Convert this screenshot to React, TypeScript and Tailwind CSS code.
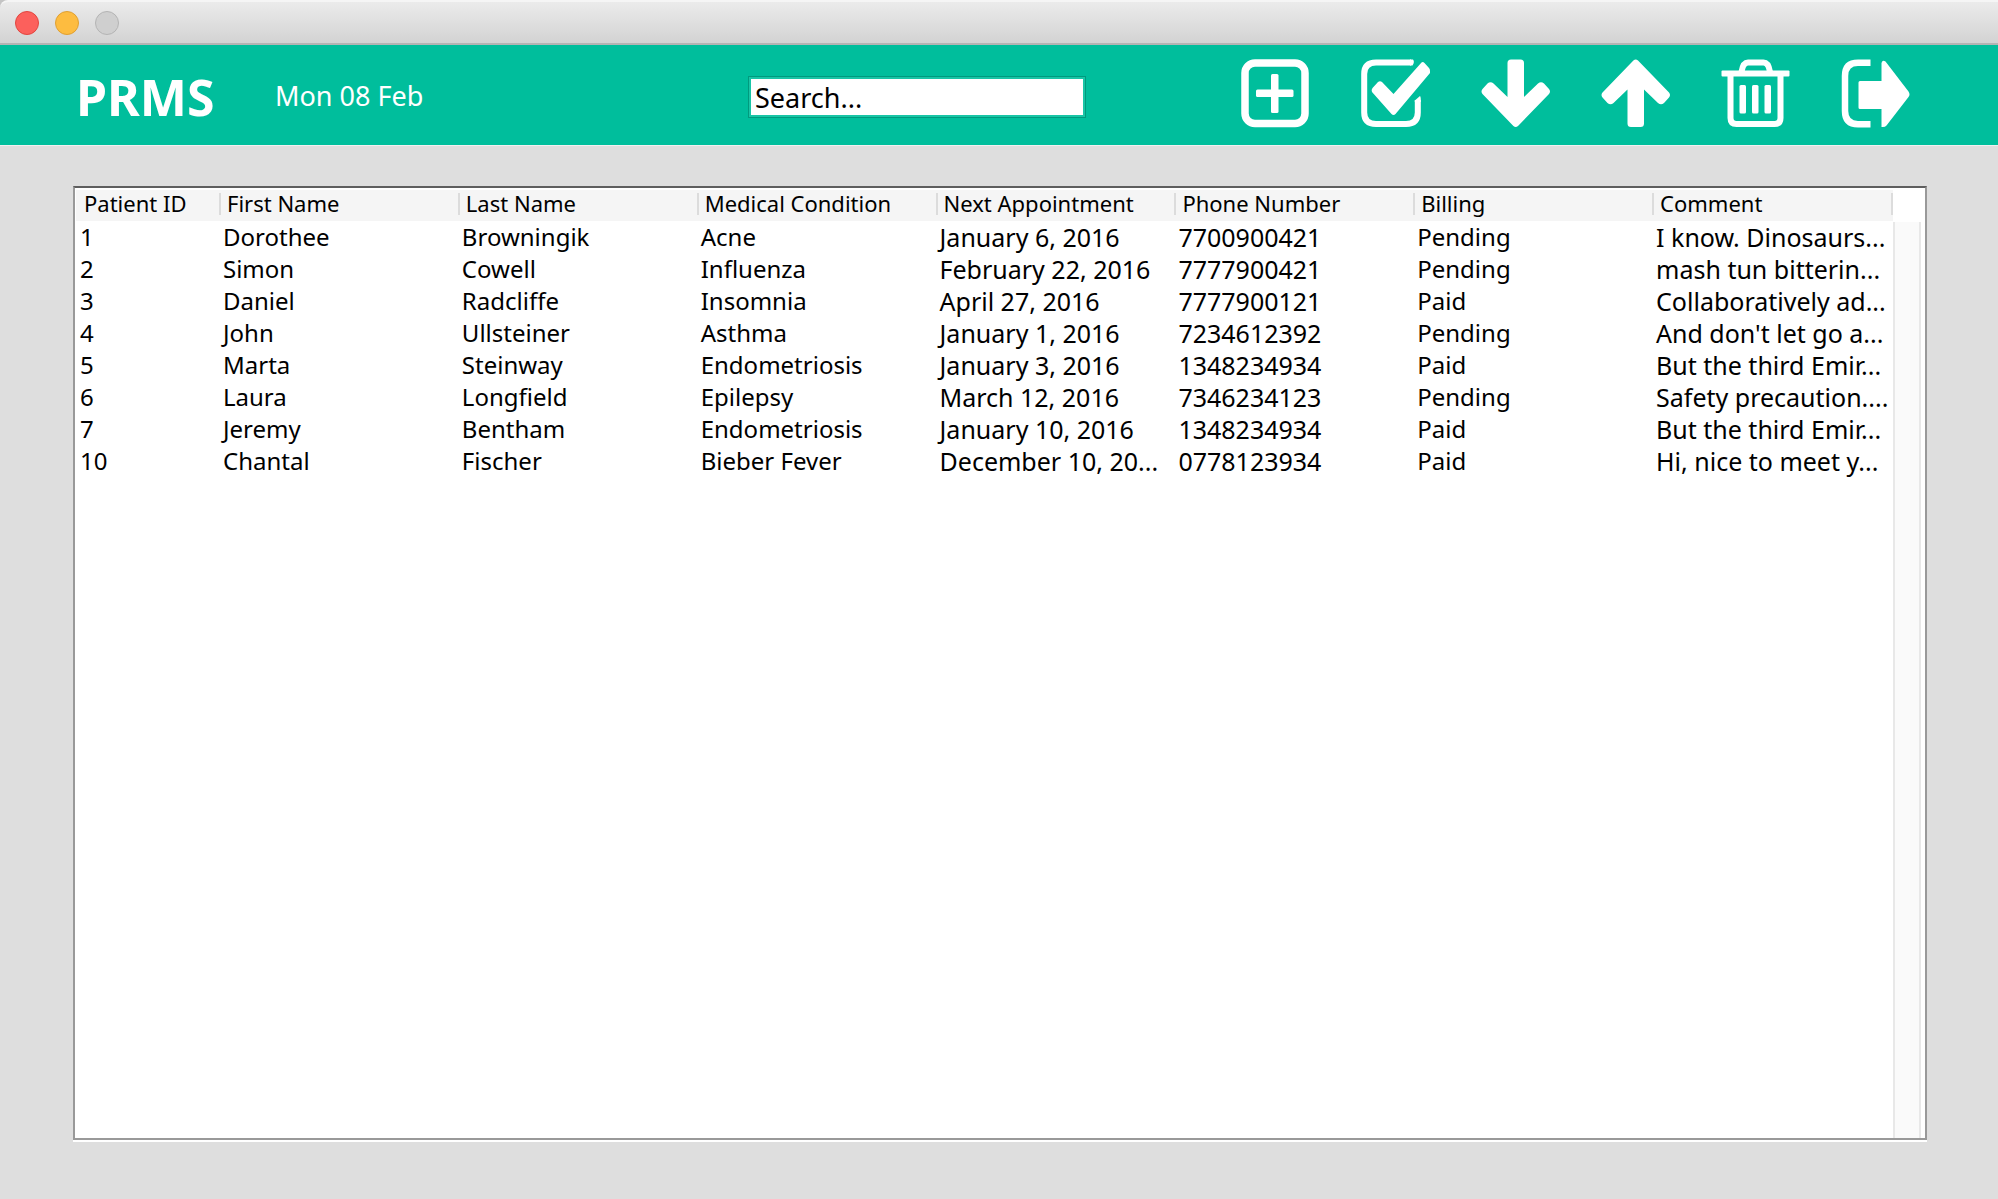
import type { ReactNode } from "react";

type Row = [string, string, string, string, string, string, string, string];

const columns = [
  { name: "Patient ID", text: "pl-1 text-2xl" },
  { name: "First Name", text: "pl-[2px] text-2xl" },
  { name: "Last Name", text: "pl-[2px] text-2xl" },
  { name: "Medical Condition", text: "pl-[2px] text-2xl" },
  { name: "Next Appointment", text: "pl-[2px] text-[25px]" },
  { name: "Phone Number", text: "pl-[2px] text-[25px]" },
  { name: "Billing", text: "pl-[2px] text-2xl" },
  { name: "Comment", text: "pl-[2px] text-[25px]" },
];

const rows: Row[] = [
  ["1", "Dorothee", "Browningik", "Acne", "January 6, 2016", "7700900421", "Pending", "I know. Dinosaurs..."],
  ["2", "Simon", "Cowell", "Influenza", "February 22, 2016", "7777900421", "Pending", "mash tun bitterin..."],
  ["3", "Daniel", "Radcliffe", "Insomnia", "April 27, 2016", "7777900121", "Paid", "Collaboratively ad..."],
  ["4", "John", "Ullsteiner", "Asthma", "January 1, 2016", "7234612392", "Pending", "And don't let go a..."],
  ["5", "Marta", "Steinway", "Endometriosis", "January 3, 2016", "1348234934", "Paid", "But the third Emir..."],
  ["6", "Laura", "Longfield", "Epilepsy", "March 12, 2016", "7346234123", "Pending", "Safety precaution...."],
  ["7", "Jeremy", "Bentham", "Endometriosis", "January 10, 2016", "1348234934", "Paid", "But the third Emir..."],
  ["10", "Chantal", "Fischer", "Bieber Fever", "December 10, 20...", "0778123934", "Paid", "Hi, nice to meet y..."],
];

function ToolButton({ label, children }: { label: string; children: ReactNode }) {
  return (
    <button type="button" aria-label={label} className="block size-[69px] shrink-0 text-white">
      <svg viewBox="0 0 69 69" className="block size-full" fill="currentColor" strokeLinejoin="round">
        {children}
      </svg>
    </button>
  );
}

function Toolbar() {
  return (
    <div className="flex gap-[51px] pb-2">
      <ToolButton label="Add patient">
        <rect x="4" y="4" width="60" height="60.5" rx="10" fill="none" stroke="currentColor" strokeWidth="7.5" />
        <rect x="30" y="15" width="7.5" height="39" rx="1.5" />
        <rect x="15" y="30.5" width="37.5" height="7.5" rx="1.5" />
      </ToolButton>
      <ToolButton label="Edit patient">
        <path
          d="M50 3.5H15Q3.2 3.5 3.2 15V53.5Q3.2 65 15 65H45Q56.800 65 56.8 53.5V41"
          fill="none"
          stroke="currentColor"
          strokeWidth="6"
        />
        <path d="M49 .5H52Q54 2.500 51.500 6.500H49ZM53.800 43V41.500L59 37Q60 38 59.800 43Z" />
        <path d="M60.500 3.500Q62 2.500 63.500 4L68 9Q69 10 69 12V14L34.500 55Q32.500 57 30.500 55L11 33Q10 31 11.500 29L17 23Q19 21.500 21 23L32.500 35Z" />
      </ToolButton>
      <ToolButton label="Move down">
        <path d="M26.500 38V4Q26.500 .5 30 .5H39.500Q43 .5 43 4V38L57 24.500Q60 22 63 24.500L68 30Q70 32.500 68 35L37 67Q34.700 69 32.400 67L1.500 35Q-.5 32.500 1.500 30L6.500 24.500Q9.500 22 12.500 24.500Z" />
      </ToolButton>
      <ToolButton label="Move up">
        <path d="M26.500 30.500V64.500Q26.500 68 30 68H39.500Q43 68 43 64.500V30.500L57 44Q60 46.500 63 44L68 38.500Q70 36 68 33.500L37 1.500Q34.700 -.5 32.400 1.500L1.500 33.500Q-.5 36 1.500 38.500L6.500 44Q9.500 46.500 12.500 44Z" />
      </ToolButton>
      <ToolButton label="Delete patient">
        <rect x="0.500" y="11.500" width="68" height="6" rx="1" />
        <g fill="none" stroke="currentColor" strokeWidth="6">
          <path d="M20.500 13Q22 3.500 27 3.500H42.500Q47.500 3.500 49 13" />
          <path d="M9.500 16V59Q9.500 65 15.500 65H53.500Q59.500 65 59.500 59V16" />
        </g>
        <rect x="18.500" y="26" width="6.500" height="28.500" rx="1.500" />
        <rect x="31" y="26" width="6.500" height="28.500" rx="1.500" />
        <rect x="43.500" y="26" width="6.500" height="28.500" rx="1.500" />
      </ToolButton>
      <ToolButton label="Log out">
        <path
          d="M29.500 3.800H17Q4 3.800 4 17V52Q4 65.200 17 65.200H29.500"
          fill="none"
          stroke="currentColor"
          strokeWidth="6.500"
        />
        <path d="M19 22H40.500V4Q41.500 .5 44.500 2.500L67.500 32.500Q69.500 35.500 67.500 38L45.500 66.500Q44 68.500 40.500 68V50H19Q17.500 50 17.500 48.500V23.500Q17.500 22 19 22Z" />
      </ToolButton>
    </div>
  );
}

function TitleBar() {
  return (
    <div className="bg-[#c4c4c4]">
      <div className="flex h-[45px] items-center gap-4 rounded-tl-lg border-t-2 border-b-2 border-t-[#f5f5f5] border-b-[#b4b4b4] bg-linear-to-b from-[#ebebeb] to-[#d3d3d3] px-[15px]">
        <button type="button" aria-label="Close window" className="size-6 rounded-full border border-[#e2463f] bg-[#fc605c]" />
        <button type="button" aria-label="Minimize window" className="size-6 rounded-full border border-[#e0a032] bg-[#fdbc40]" />
        <button type="button" aria-label="Zoom window" disabled className="size-6 rounded-full border border-[#b4b4b4] bg-[#cfcfcf]" />
      </div>
    </div>
  );
}

export default function App() {
  return (
    <div className="flex min-h-screen flex-col bg-[#dedede] font-['Noto_Sans',sans-serif] text-black">
      <TitleBar />
      <header className="flex h-[100px] items-center bg-[#00be9c] pt-1 pr-[88px] pl-[76px] text-white">
        <h1 className="w-[199px] text-[50px] leading-[50px] font-bold">PRMS</h1>
        <p className="flex-1 pb-[2px] text-[27px] leading-8">Mon 08 Feb</p>
        <input
          type="text"
          aria-label="Search"
          defaultValue="Search..."
          className="mr-[156px] h-10 w-[336px] border-2 border-[#19c5a6] bg-white px-1 text-[27px] leading-8 text-black outline outline-[#009a7e]"
        />
        <Toolbar />
      </header>
      <main className="flex flex-1 border-t border-[#f0f0f0] pt-10 pr-[71px] pb-[57px] pl-[73px]">
        <div className="flex flex-1 border-b-2 border-white">
          <div className="flex flex-1 border-2 border-[#999999] border-t-[#5e5e5e] bg-white pt-[2px] pl-px">
            <div className="flex-1">
              <table className="w-full table-fixed border-collapse">
                <thead>
                  <tr className="h-[31px] bg-[#f5f5f5]">
                    {columns.map((column) => (
                      <th
                        key={column.name}
                        scope="col"
                        className="group p-0 pb-1 text-left text-[22px] font-normal whitespace-nowrap first:w-[145px]"
                      >
                        <div className="flex h-[22px] items-center border-r-2 border-[#dcdcdc] pl-[6px] group-first:pl-2">
                          {column.name}
                        </div>
                      </th>
                    ))}
                  </tr>
                </thead>
                <tbody>
                  {rows.map((row) => (
                    <tr key={row[0]} className="h-8">
                      {row.map((cell, i) => (
                        <td key={columns[i].name} className="p-0">
                          <div className={`leading-8! whitespace-nowrap ${columns[i].text}`}>{cell}</div>
                        </td>
                      ))}
                    </tr>
                  ))}
                </tbody>
              </table>
            </div>
            <div className="flex w-8 flex-col pt-8 pr-1">
              <div className="flex-1 border-x-2 border-[#e8e8e8] bg-[#fafafa]" />
            </div>
          </div>
        </div>
      </main>
    </div>
  );
}
